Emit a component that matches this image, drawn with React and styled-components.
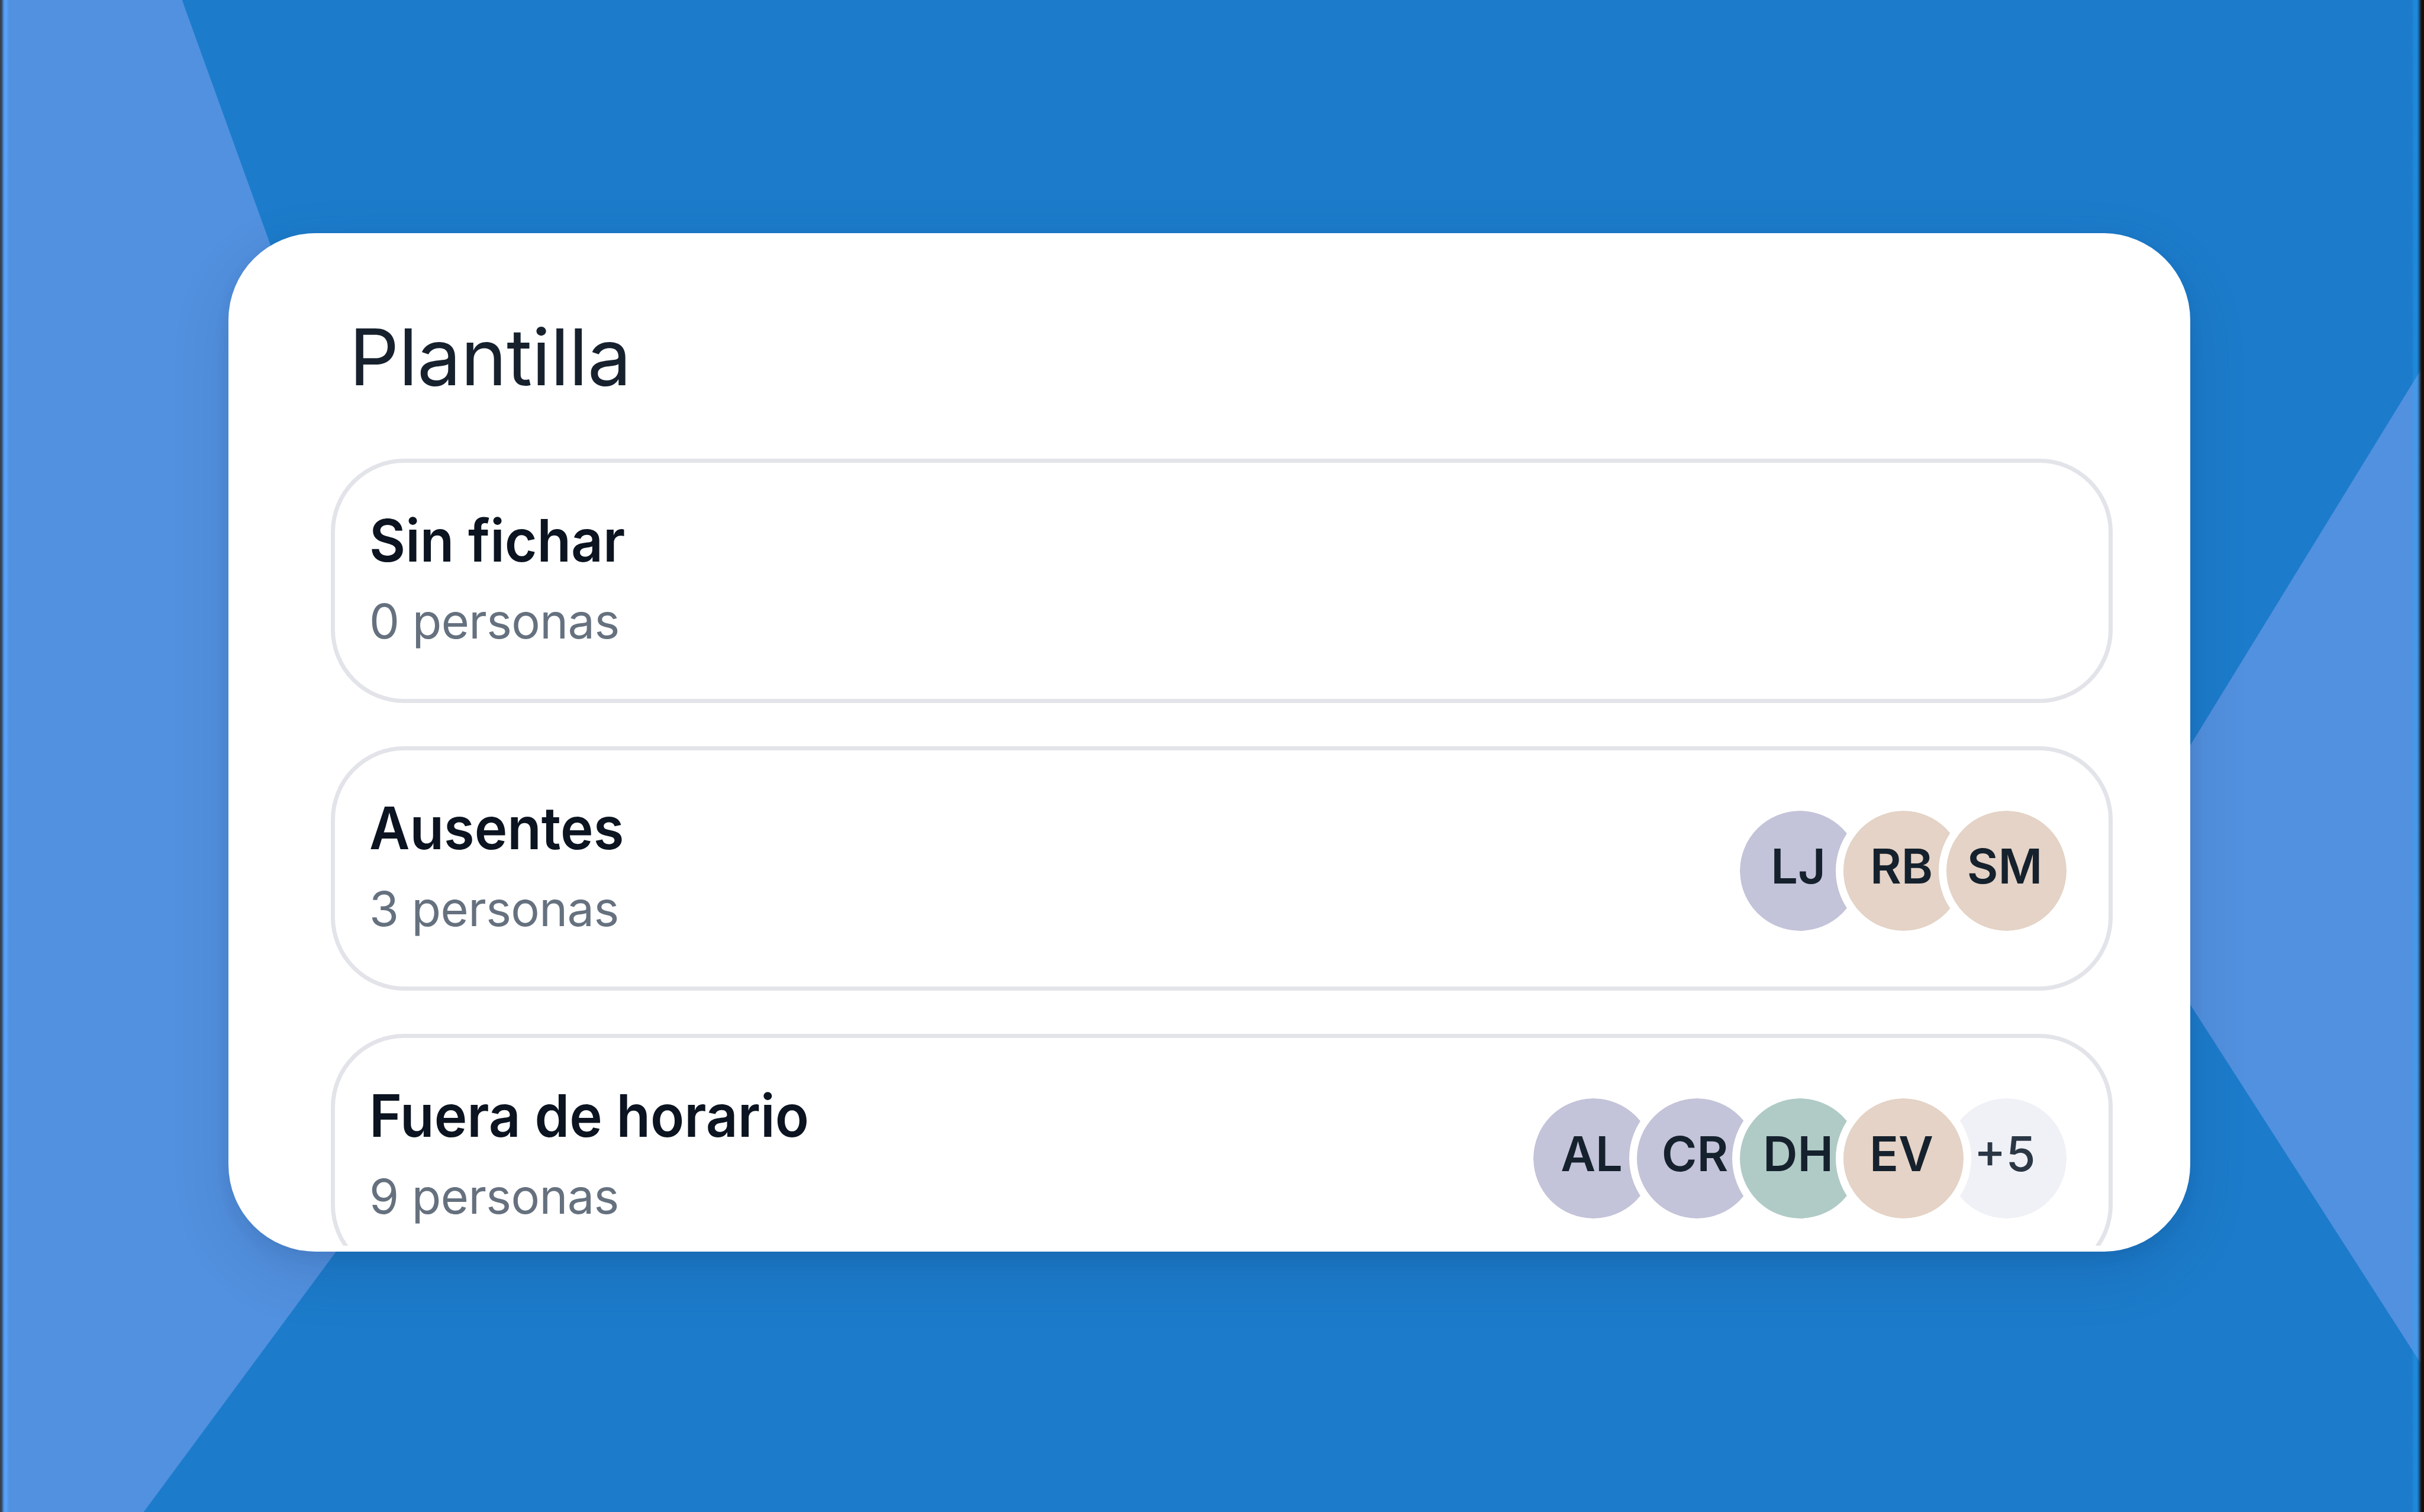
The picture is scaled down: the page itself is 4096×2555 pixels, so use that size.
import React from "react";
import styled, { createGlobalStyle } from "styled-components";

const GlobalStyle = createGlobalStyle`
  *, *::before, *::after { box-sizing: border-box; }
  html, body { margin: 0; padding: 0; }
  body { font-family: Inter, "Liberation Sans", sans-serif; overflow: hidden; }
`;

const Stage = styled.main`
  position: relative;
  width: 4096px;
  height: 2555px;
  padding: 394px 0 0 386px;
  overflow: hidden;
  background: #1c7ccb;
`;

const Backdrop = styled.svg`
  position: absolute;
  inset: 0;
  display: block;
`;

const Card = styled.section`
  position: relative;
  display: flex;
  flex-direction: column;
  width: 3315px;
  height: 1721px;
  padding: 0 131px 10px 173px;
  border-radius: 147px;
  background: #fff;
  box-shadow: 0 36px 100px rgba(20, 30, 70, 0.14), 0 8px 24px rgba(20, 40, 90, 0.07);
`;

const Title = styled.h1`
  flex: none;
  height: 381px;
  margin: 0;
  padding: 129px 0 0 31px;
  font-size: 132px;
  line-height: 160px;
  font-weight: 400;
  letter-spacing: -0.6px;
  color: #17212e;
`;

const List = styled.ul`
  flex: 1;
  min-height: 0;
  margin: 0;
  padding: 0;
  list-style: none;
  overflow: hidden;
  display: flex;
  flex-direction: column;
  gap: 73px;
`;

const Item = styled.li`
  flex: none;
  display: flex;
  justify-content: space-between;
  align-items: flex-start;
  width: 3011px;
  height: 413px;
  padding: 0 58px;
  border: 7px solid #e2e4e9;
  border-radius: 124px;
`;

const Info = styled.div`
  display: flex;
  flex-direction: column;
  padding-top: 71px;
`;

const Name = styled.h2`
  margin: 0;
  font-size: 99px;
  line-height: 120px;
  font-weight: 600;
  white-space: nowrap;
  transform: scaleX(0.95);
  transform-origin: left center;
  color: #0b1420;
`;

const Count = styled.p`
  margin: 28px 0 0;
  font-size: 81px;
  line-height: 98px;
  letter-spacing: -0.6px;
  color: #66717f;
`;

const Stack = styled.div`
  display: flex;
  padding-top: 89px;
`;

const Avatar = styled.span`
  position: relative;
  z-index: ${(p) => (p.$muted ? 0 : 1)};
  display: flex;
  justify-content: center;
  width: 229px;
  height: 229px;
  margin-left: -54.5px;
  padding: 45px 6px 0 0;
  border: 13px solid #fff;
  border-radius: 50%;
  background: ${(p) => p.$tone};
  background-clip: padding-box;
  font-size: 81px;
  line-height: 98px;
  font-weight: ${(p) => (p.$muted ? 500 : 600)};
  color: ${(p) => (p.$muted ? "#2b3744" : "#15212d")};
`;

const EdgeLine = styled.span`
  position: absolute;
  top: 0;
  bottom: 0;
  ${(p) => p.$side}: 0;
  width: ${(p) => p.$width}px;
  background: linear-gradient(to ${(p) => (p.$side === "left" ? "right" : "left")}, ${(p) => p.$stops});
`;

const tones = {
  lavender: "#c3c3d9",
  peach: "#e4d3c6",
  green: "#b0cbc6",
  grey: "#f0f1f6",
};

const groups = [
  { name: "Sin fichar", count: "0 personas", people: [] },
  {
    name: "Ausentes",
    count: "3 personas",
    people: [["LJ", "lavender"], ["RB", "peach"], ["SM", "peach"]],
  },
  {
    name: "Fuera de horario",
    count: "9 personas",
    people: [["AL", "lavender"], ["CR", "lavender"], ["DH", "green"], ["EV", "peach"], ["+5", "grey"]],
  },
];

export default function App() {
  return (
    <>
      <GlobalStyle />
      <Stage>
        <Backdrop width="4096" height="2555" viewBox="0 0 4354 2716" preserveAspectRatio="none" aria-hidden="true">
          <path d="M0 0H327L963 1762L258 2716H0Z" fill="#5291df" />
          <path d="M4354 655L3788 1577L4354 2458Z" fill="#5291df" />
        </Backdrop>
        <EdgeLine $side="left" $width={15} $stops="#34424f 0 2px, #559bf0 7px, #58a2fb 9px 11px, rgba(88,162,251,0) 15px" />
        <EdgeLine
          $side="right"
          $width={21}
          $stops="#1a0e06 0 4px, rgba(20,110,190,.35) 10px, rgba(40,170,255,.28) 12px 17px, rgba(40,170,255,0) 21px"
        />
        <Card>
          <Title>Plantilla</Title>
          <List>
            {groups.map((g) => (
              <Item key={g.name}>
                <Info>
                  <Name>{g.name}</Name>
                  <Count>{g.count}</Count>
                </Info>
                <Stack>
                  {g.people.map(([label, tone]) => (
                    <Avatar key={label} $tone={tones[tone]} $muted={tone === "grey"}>
                      {label}
                    </Avatar>
                  ))}
                </Stack>
              </Item>
            ))}
          </List>
        </Card>
      </Stage>
    </>
  );
}
